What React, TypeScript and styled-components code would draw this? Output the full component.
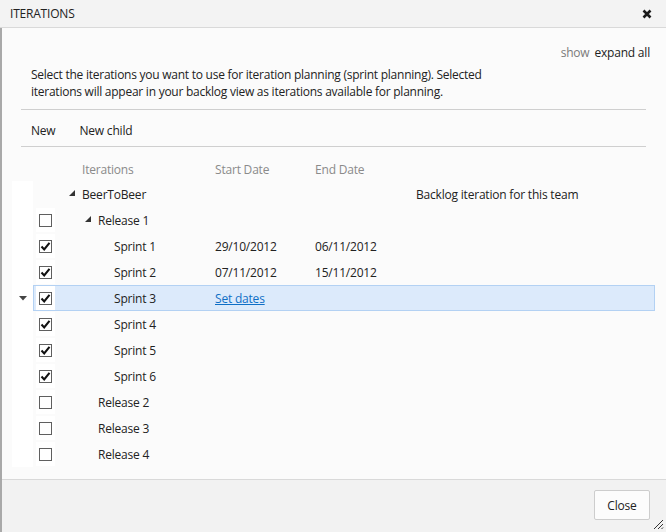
import React from "react";
import styled, { createGlobalStyle } from "styled-components";

const GlobalStyle = createGlobalStyle`
  html, body { margin: 0; padding: 0; background: #fbfbfb; }
  body {
    font-family: "Open Sans", "Noto Sans", sans-serif;
    font-size: 12px;
    color: #222;
  }
`;

const Dialog = styled.div`
  width: 666px;
  height: 532px;
  display: flex;
  flex-direction: column;
  background: #fbfbfb;
  overflow: hidden;
`;

const TitleBar = styled.div`
  height: 27px;
  flex: none;
  display: flex;
  align-items: center;
  justify-content: space-between;
  padding: 0 14px 0 10px;
  background: #f3f3f3;
  border-bottom: 1px solid #d9d9d9;
  letter-spacing: -0.2px;
`;

const Frame = styled.div`
  flex: 1;
  display: flex;
  flex-direction: column;
  border-left: 2px solid #a9a9a9;
  min-height: 0;
`;

const Body = styled.div`
  flex: 1;
  display: flex;
  flex-direction: column;
`;

const TopLinks = styled.div`
  margin-top: 16px;
  padding-right: 16px;
  display: flex;
  justify-content: flex-end;
  gap: 5px;
  line-height: 17px;
  letter-spacing: -0.2px;
`;

const Muted = styled.span`
  color: #7a7a7a;
`;

const Description = styled.p`
  margin: 5px 0 0 29px;
  line-height: 17px;
  width: 470px;
  letter-spacing: -0.25px;
`;

const Section = styled.div`
  margin: 9px 20px 0 19px;
  border-top: 1px solid #cfcfcf;
  border-bottom: 1px solid #cfcfcf;
  height: 38px;
  box-sizing: border-box;
  display: flex;
  gap: 24px;
  padding: 12px 0 0 10px;
  line-height: 17px;
  letter-spacing: -0.2px;
`;

const Grid = styled.div`
  margin: 0 11px 0 10px;
  letter-spacing: -0.2px;
`;

const HeaderRow = styled.div`
  height: 34px;
  box-sizing: border-box;
  padding-top: 14px;
  line-height: 17px;
  display: flex;
  align-items: flex-start;
  color: #8a8a8a;
`;

const Row = styled.div`
  height: 26px;
  display: flex;
`;

const Gutter = styled.div<{ $blank?: boolean }>`
  width: 21px;
  flex: none;
  background: ${(p) => (p.$blank ? "transparent" : "#ffffff")};
  display: flex;
  align-items: center;
  justify-content: center;
`;

const Main = styled.div<{ $selected?: boolean }>`
  flex: 1;
  display: flex;
  align-items: center;
  box-sizing: border-box;
  border: 1px solid ${(p) => (p.$selected ? "#b3d1f3" : "transparent")};
  background: ${(p) => (p.$selected ? "#dceafb" : "transparent")};
`;

const HeaderMain = styled.div`
  flex: 1;
  display: flex;
  padding-left: 1px;
`;

const CheckCell = styled.div<{ $blank?: boolean }>`
  width: 19px;
  height: 24px;
  margin-left: 2px;
  flex: none;
  display: flex;
  align-items: center;
  justify-content: center;
  background: ${(p) => (p.$blank ? "transparent" : "#ffffff")};
`;

const NameCell = styled.div<{ $level: number }>`
  width: 160px;
  flex: none;
  display: flex;
  align-items: center;
  padding-left: ${(p) => 14 + p.$level * 16}px;
  box-sizing: border-box;
`;

const Toggle = styled.span`
  width: 13px;
  flex: none;
  display: flex;
  align-items: center;
  padding-bottom: 3px;
`;

const HeaderName = styled.div`
  width: 160px;
  flex: none;
  padding-left: 27px;
  box-sizing: border-box;
`;

const DateCell = styled.div<{ $w: number }>`
  width: ${(p) => p.$w}px;
  flex: none;
`;

const Link = styled.a`
  color: #0f6fc6;
  text-decoration: underline;
  cursor: pointer;
`;

const Box = styled.span`
  width: 13px;
  height: 13px;
  box-sizing: border-box;
  border: 1px solid #5f5f5f;
  background: #fff;
  display: flex;
  align-items: center;
  justify-content: center;
`;

const Footer = styled.div`
  height: 53px;
  flex: none;
  box-sizing: border-box;
  border-top: 1px solid #d9d9d9;
  background: #f2f2f2;
  display: flex;
  justify-content: flex-end;
  align-items: flex-start;
  padding: 10px 16px 0 0;
  position: relative;
`;

const Button = styled.button`
  width: 56px;
  height: 30px;
  border: 1px solid #cdcdcd;
  border-radius: 2px;
  background: #fcfcfc;
  font-family: inherit;
  font-size: 12px;
  color: #222;
  letter-spacing: -0.2px;
`;

const Grip = styled.svg`
  position: absolute;
  right: 2px;
  bottom: 2px;
`;

type Item = {
  name: string;
  level: number;
  expandable?: boolean;
  checkbox?: boolean;
  checked?: boolean;
  start?: string;
  end?: string;
  note?: string;
  setDates?: boolean;
  selected?: boolean;
};

const items: Item[] = [
  { name: "BeerToBeer", level: 0, expandable: true, checkbox: false, note: "Backlog iteration for this team" },
  { name: "Release 1", level: 1, expandable: true, checkbox: true, checked: false },
  { name: "Sprint 1", level: 2, checkbox: true, checked: true, start: "29/10/2012", end: "06/11/2012" },
  { name: "Sprint 2", level: 2, checkbox: true, checked: true, start: "07/11/2012", end: "15/11/2012" },
  { name: "Sprint 3", level: 2, checkbox: true, checked: true, setDates: true, selected: true },
  { name: "Sprint 4", level: 2, checkbox: true, checked: true },
  { name: "Sprint 5", level: 2, checkbox: true, checked: true },
  { name: "Sprint 6", level: 2, checkbox: true, checked: true },
  { name: "Release 2", level: 1, checkbox: true, checked: false },
  { name: "Release 3", level: 1, checkbox: true, checked: false },
  { name: "Release 4", level: 1, checkbox: true, checked: false },
];

function Checkbox({ checked }: { checked?: boolean }) {
  return (
    <Box>
      {checked && (
        <svg width="11" height="11" viewBox="0 0 11 11">
          <path d="M1.5 5.5 L4.2 8.4 L9.5 1.8" fill="none" stroke="#111" strokeWidth="2.1" />
        </svg>
      )}
    </Box>
  );
}

export default function App() {
  return (
    <>
      <GlobalStyle />
      <Dialog>
        <TitleBar>
          <span>ITERATIONS</span>
          <svg width="10" height="10" viewBox="0 0 10 10">
            <path d="M1.5 1.5 L8.5 8.5 M8.5 1.5 L1.5 8.5" stroke="#1a1a1a" strokeWidth="2.6" />
          </svg>
        </TitleBar>
        <Frame>
          <Body>
            <TopLinks>
              <Muted>show</Muted>
              <span>expand all</span>
            </TopLinks>
            <Description>
              Select the iterations you want to use for iteration planning (sprint planning). Selected
              iterations will appear in your backlog view as iterations available for planning.
            </Description>
            <Section>
              <span>New</span>
              <span>New child</span>
            </Section>
            <Grid>
              <HeaderRow>
                <Gutter $blank />
                <HeaderMain>
                  <CheckCell $blank />
                  <HeaderName>Iterations</HeaderName>
                  <DateCell $w={100}>Start Date</DateCell>
                  <DateCell $w={100}>End Date</DateCell>
                </HeaderMain>
              </HeaderRow>
              {items.map((it) => (
                <Row key={it.name}>
                  <Gutter>
                    {it.selected && (
                      <svg width="8" height="5" viewBox="0 0 8 5">
                        <polygon points="0,0 8,0 4,4.5" fill="#444" />
                      </svg>
                    )}
                  </Gutter>
                  <Main $selected={it.selected}>
                    <CheckCell $blank={!it.checkbox}>{it.checkbox && <Checkbox checked={it.checked} />}</CheckCell>
                    <NameCell $level={it.level}>
                      <Toggle>
                        {it.expandable && (
                          <svg width="6" height="6" viewBox="0 0 6 6">
                            <polygon points="6,0 6,6 0,6" fill="#333" />
                          </svg>
                        )}
                      </Toggle>
                      <span>{it.name}</span>
                    </NameCell>
                    <DateCell $w={100}>{it.setDates ? <Link>Set dates</Link> : it.start}</DateCell>
                    <DateCell $w={101}>{it.end}</DateCell>
                    <span>{it.note}</span>
                  </Main>
                </Row>
              ))}
            </Grid>
          </Body>
          <Footer>
            <Button>Close</Button>
            <Grip width="12" height="12" viewBox="0 0 12 12">
              <path d="M11 2 L2 11 M11 6 L6 11 M11 9.5 L9.5 11" stroke="#333" strokeWidth="1" />
            </Grip>
          </Footer>
        </Frame>
      </Dialog>
    </>
  );
}
